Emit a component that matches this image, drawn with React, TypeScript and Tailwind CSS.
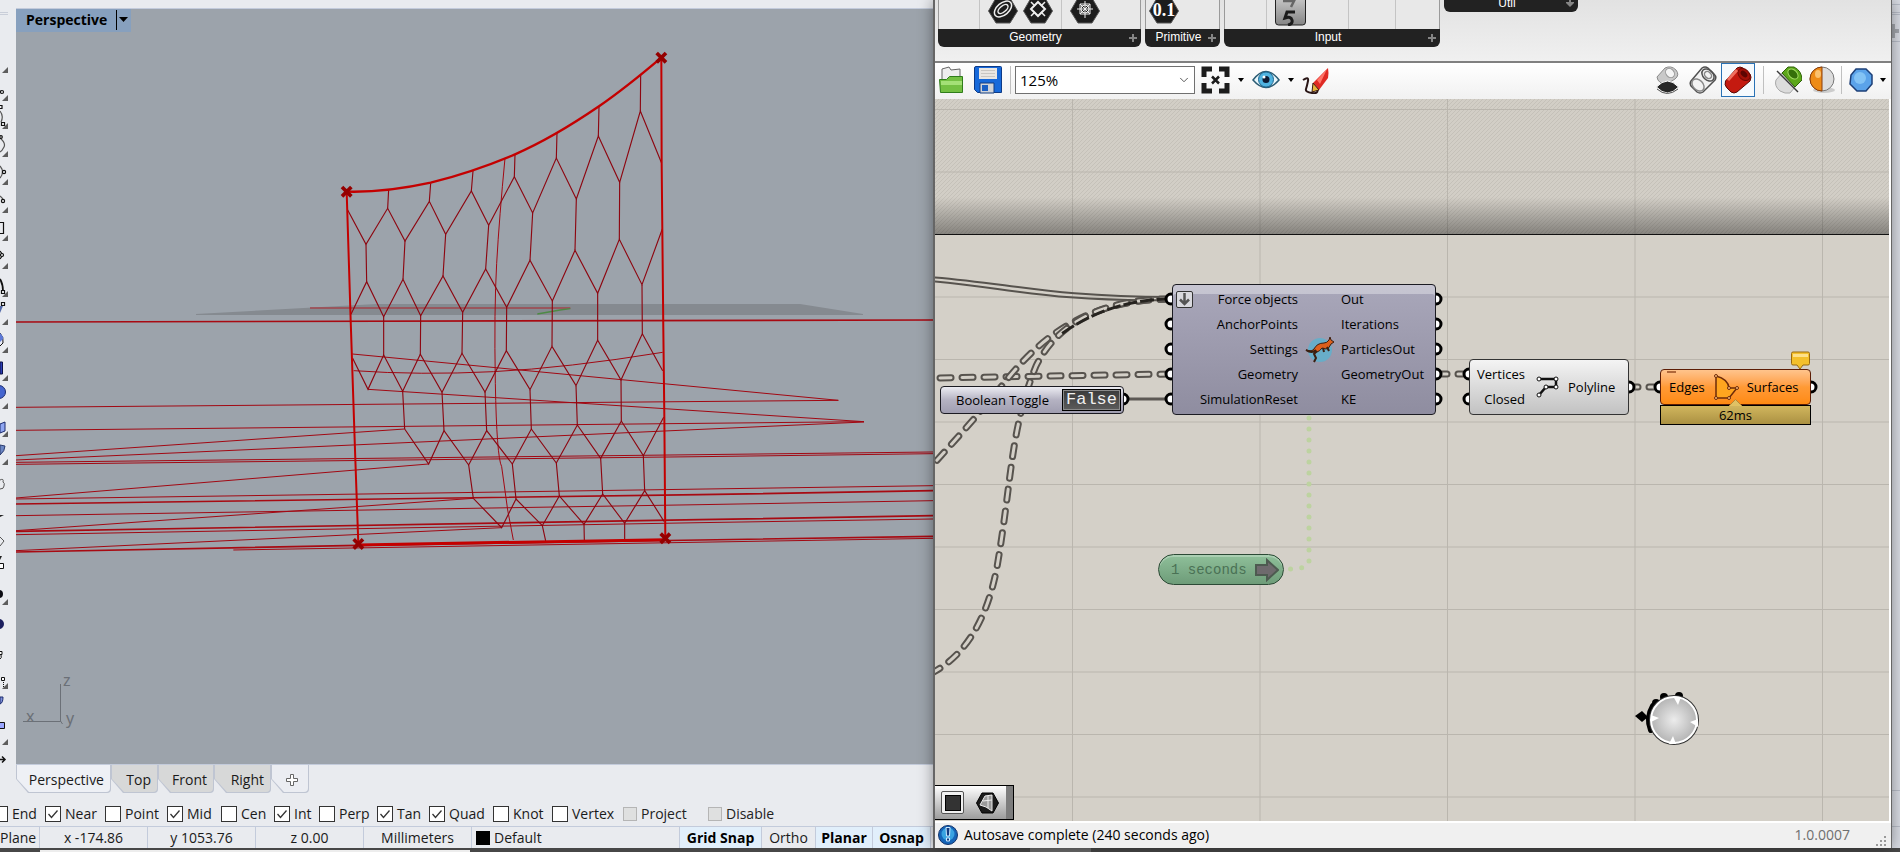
import React from "react";
import { ChevronDown } from "lucide-react";

const snaps = [
  { name: "End", on: false, width: "w-[53px]" },
  { name: "Near", on: true, width: "w-[60px]" },
  { name: "Point", on: false, width: "w-[62px]" },
  { name: "Mid", on: true, width: "w-[54px]" },
  { name: "Cen", on: false, width: "w-[53px]" },
  { name: "Int", on: true, width: "w-[45px]" },
  { name: "Perp", on: false, width: "w-[58px]" },
  { name: "Tan", on: true, width: "w-[52px]" },
  { name: "Quad", on: true, width: "w-[64px]" },
  { name: "Knot", on: false, width: "w-[59px]" },
  { name: "Vertex", on: false, width: "w-[71px]" },
  { name: "Project", on: false, width: "w-[85px]", disabled: true },
  { name: "Disable", on: false, width: "w-[85px]", disabled: true },
];

const modes = [
  { name: "Grid Snap", on: true, width: "w-[82px]" },
  { name: "Ortho", on: false, width: "w-[54px]" },
  { name: "Planar", on: true, width: "w-[57px]" },
  { name: "Osnap", on: true, width: "w-[58px]" },
];

const viewTabs = [
  { name: "Perspective", width: "w-[95px]", active: true },
  { name: "Top", width: "w-[47px]", active: false },
  { name: "Front", width: "w-[56px]", active: false },
  { name: "Right", width: "w-[57px]", active: false },
];

// honeycomb mesh, drawn at 3x and scaled down in the viewport
const meshPaths = [
  "M206 478 203 535M332 460 328 514M459 423 454 483M585 373 583 440M711 308 709 384M837 231 835 318M962 135 961 243",
  "M83 540 138 643 203 535 255 633 328 514 377 613 454 483 506 586 583 440 638 549 709 384 769 507 835 318 899 457 961 243 1025 400",
  "M138 643 140 755M255 633 249 748M377 613 369 738M506 586 497 717M638 549 630 691M769 507 765 661M899 457 898 628",
  "M93 853 140 755 191 860 249 748 302 857 369 738 428 847 497 717 560 832 630 691 697 813 765 661 833 790 898 628 966 764 1027 597",
  "M191 860V978M302 857 301 975M428 847 426 971M560 832 559 962M697 813 696 949M833 790V931M966 764 967 911",
  "M98 985 144 1078 191 975 248 1084 301 973 366 1087 426 970 495 1086 559 962 630 1079 696 949 768 1067 833 931 903 1050 967 911 1028 1022",
  "M248 1084 254 1197M366 1087 372 1202M495 1086 500 1202M630 1079 634 1197M768 1067 772 1185M903 1050 904 1173",
  "M254 1197 326 1302 372 1202 446 1305 500 1202 577 1302 634 1197 709 1299 772 1185 842 1285 904 1173 970 1277 1031 1162",
  "M446 1305 460 1405M577 1302 588 1407M709 1299 718 1398M842 1285 848 1392M970 1277 974 1382",
  "M460 1405 545 1493 588 1407 667 1487 718 1398 792 1483 848 1392 914 1480 974 1382 1032 1474",
  "M667 1487 677 1533M792 1483 793 1530M914 1480V1528",
];

const longLines = [
  "M-912 1132 1555 1111 97 972",
  "M-912 1201 1632 1175 144 1078",
  "M-912 1277 254 1197",
  "M-912 1290 480 1228 1632 1176",
  "M-912 1297 1140 1274 1839 1266",
  "M-912 1303 1140 1280 1839 1271",
  "M-912 1404 326 1302",
  "M-912 1407 480 1387 1839 1367",
  "M-912 1457 1140 1424 1839 1412",
  "M-912 1502 460 1405",
  "M-912 1514 1140 1478 1839 1467",
  "M-912 1562 545 1493",
  "M-260 1560 1839 1525",
  "M101 1022Q300 1036 520 1025T1028 967",
  "M555 385Q538 560 530 700T526 1060 545 1310L563 1440 580 1530",
];

const thickLines = [
  "M-912 876 1839 870",
  "M-912 1422 1140 1394 1839 1382",
  "M-912 1504 1140 1469 1839 1457",
  "M-912 1566 115 1546 1839 1519",
];

const anchors = [[80, 485], [1024, 83], [115, 1542], [1036, 1525]];

const Viewport = () => (
  <section className="relative flex-1 overflow-hidden border-y border-[#c3cbdb] bg-[#9ca3ab]">
    <svg className="absolute inset-0 h-full w-full" aria-hidden="true">
      <g transform="translate(-16 -9)">
        <path d="M196 314 376 304H800L863 314V315H196Z" fill="#858a90" />
        <g transform="translate(320 30) scale(.33333)" fill="none">
          <path d="M-30 834H751" stroke="#a0444d" strokeWidth="5" />
          <path d="M652 852 720 840 751 836" stroke="#4d8a45" strokeWidth="4" />
          <g stroke="#a20812" strokeWidth="3">
            {longLines.map((d) => <path key={d} d={d} />)}
          </g>
          <g stroke="#a80a12" strokeWidth="5">
            {thickLines.map((d) => <path key={d} d={d} />)}
          </g>
          <g stroke="#8d0610" strokeWidth="3.4">
            {meshPaths.map((d) => <path key={d} d={d} />)}
          </g>
          <g stroke="#c40000" strokeWidth="6">
            <path d="M80 485C155 487 245 477 332 458C420 436 505 407 585 373C675 334 755 285 837 229C905 182 965 133 1024 83" strokeWidth="7" />
            <path d="M80 485 92 870 102 1170 105 1260 115 1542" />
            <path d="M1024 83 1025 400 1030 900 1033 1160 1036 1527" />
            <path d="M115 1545 1036 1529" strokeWidth="9" />
          </g>
          <g stroke="#950000" strokeWidth="11">
            {anchors.map(([x, y]) => (
              <path key={x} d={`M${x - 14} ${y - 14}l28 28m0 -28l-28 28`} />
            ))}
          </g>
        </g>
        <path d="M60.500 684V721.500H23M60.500 721l2 3" stroke="#6b7077" fill="none" />
        <g fill="#6b7077" fontFamily="Noto Sans, sans-serif" fontSize="16">
          <text x="63" y="686">z</text>
          <text x="26" y="722">x</text>
          <text x="66" y="724">y</text>
        </g>
      </g>
    </svg>
    <button className="relative flex h-[23px] w-[115px] items-center bg-[#87a0be] pb-[2px] pl-2.5 text-[14px] leading-5 font-bold text-black">
      <span className="w-[90px] text-left">Perspective</span>
      <span className="h-5 w-px bg-black" />
      <svg className="ml-0.5" width="9" height="6" aria-hidden="true"><path d="M0 0h9L4.500 5z" /></svg>
    </button>
  </section>
);

const flyouts = [70, 98, 126, 154, 182, 210, 238, 266, 294, 322, 350, 378, 406, 434, 462, 602, 686, 742];

const SideTools = () => (
  <svg className="w-4 shrink-0" aria-hidden="true">
    <path d="M0 12.500H8M0 14.500H8" stroke="#c9ced9" />
    {flyouts.map((y) => <path key={y} d={`M8 ${y - 3}v6h-6z`} fill="#5d5d5d" />)}
    <g fill="#f4f5f8" stroke="#111" strokeWidth="1.2">
      <path d="M0 91l2 1" />
      <circle cx="2" cy="92" r="1.500" />
      <path d="M-2 105.500h4v3h-4zM1.500 122.500h3v3h-3z" />
      <path d="M0 111q4 5 1 11M0 138q6 5 4 9t-4 5M0 166q5 6 0 12M0 196l3 3" fill="none" stroke="#555" />
      <circle cx="1" cy="137" r="1.300" />
      <circle cx="4" cy="172" r="1.600" />
      <circle cx="3" cy="201" r="1.600" />
      <path d="M-2 222.500H3.500V233.500H-2M0 251l3 4-3 4" fill="none" />
      <circle cx="2" cy="255" r="1.500" />
      <path d="M0 279q3 5 3 12" fill="none" strokeWidth="1.800" />
      <path d="M1.500 290.500h3v3h-3zM1.500 302.500h3v3h-3z" />
    </g>
    <path d="M0 306l3 0-3 7z" fill="#536aa9" />
    <path d="M0 333q4 4 3 10l-3 3" fill="#e9ebf5" stroke="#111" />
    <path d="M0 333q4 4 3 6l-3 3z" fill="#5d79d8" />
    <path d="M0 362h2.500v12H0z" fill="#2c3db6" stroke="#0d1245" />
    <circle cx="-1" cy="392" r="6.500" fill="#4565cf" stroke="#1c2c6e" />
    <path d="M0 424l5-2v9l-5 2z" fill="#8fa6f2" stroke="#1c2c6e" />
    <path d="M0 445l5 1q0 5-5 9z" fill="#6c87c5" stroke="#2b3c6e" />
    <path d="M0 480q4-2 3 2 2 1 1 4 0 3-4 3M0 537l4 4-4 5" fill="none" stroke="#555" />
    <path d="M0 515h4l-4 2M0 556l2 0-2 4z" fill="#222" />
    <path d="M-2 563.500H3.500V568.500H-2" fill="#fff" stroke="#111" />
    <circle cx="-1" cy="594" r="4" fill="#0c0c14" />
    <circle cx="-1" cy="624" r="5" fill="#1b1f5e" />
    <path d="M-1 651.500h3v3h-3zM1.500 677.500h3v3h-3zM0 659q2-1 1-4" fill="#fff" stroke="#111" />
    <path d="M3.500 682v5" stroke="#111" strokeDasharray="1 1" />
    <path d="M0 697h3q0 6-3 7z" fill="#7d8fd9" stroke="#1c2c6e" />
    <path d="M-1 722.500H4.500V728.500H-1" fill="#9aa6ff" stroke="#111" />
    <path d="M0 759.500h4m-2-3l3 3-3 3" fill="none" stroke="#111" strokeWidth="1.500" />
  </svg>
);

const ViewTabs = () => (
  <nav className="flex h-7 pl-4 text-[14px] leading-5">
    {viewTabs.map((tab) => (
      <button
        key={tab.name}
        className={`${tab.width} flex h-7 rounded-br bg-[#bfc5d2] pr-px pb-px pl-px [clip-path:polygon(0_0,100%_0,100%_100%,12px_100%,0_14px)]`}
      >
        <span
          className={`flex h-full w-full items-center justify-end rounded-br pt-0.5 pr-1.5 [clip-path:polygon(0_0,100%_0,100%_100%,12px_100%,0_14px)] ${
            tab.active ? "bg-[#eef0f5]" : "bg-[#d7d8d8]"
          }`}
        >
          {tab.name}
        </span>
      </button>
    ))}
    <button
      aria-label="New viewport"
      className="flex h-7 w-[38px] rounded-br bg-[#bfc5d2] px-px pb-px [clip-path:polygon(0_0,100%_0,100%_100%,12px_100%,0_14px)]"
    >
      <span className="flex h-full w-full items-center justify-center rounded-br bg-[#ebedf2] pt-0.5 pl-1 [clip-path:polygon(0_0,100%_0,100%_100%,12px_100%,0_14px)]">
        <svg width="12" height="12" fill="#fff" stroke="#666"><path d="M4.500.5h3v4h4v3h-4v4h-3v-4h-4v-3h4z" /></svg>
      </span>
    </button>
  </nav>
);

const SnapRow = () => (
  <div className="-ml-2 flex h-[33px] items-center pt-2 text-[14px] leading-5">
    {snaps.map((s) => (
      <label key={s.name} className={`${s.width} flex shrink-0 items-center gap-1 ${s.disabled ? "text-[#222]" : ""}`}>
        <span className="grid shrink-0">
          <input
            type="checkbox"
            defaultChecked={s.on}
            disabled={s.disabled}
            className="col-start-1 row-start-1 h-4 w-4 appearance-none border border-[#333] bg-white disabled:h-3.5 disabled:w-3.5 disabled:border-[#b5b5b5] disabled:bg-[#dfe0e0]"
          />
          {s.on && (
            <svg className="pointer-events-none col-start-1 row-start-1" width="16" height="16" aria-hidden="true">
              <path d="M3.500 8l3 3.500 6-7" fill="none" stroke="#333" strokeWidth="1.300" />
            </svg>
          )}
        </span>
        {s.name}
      </label>
    ))}
  </div>
);

const LeftStatus = () => (
  <footer className="flex h-[22px] border-t border-[#c3cbdb] text-[14px] leading-[22px]">
    <span className="w-10 border-r border-[#c3cbdb] pr-2 text-right">Plane</span>
    <span className="w-[108px] border-r border-[#c3cbdb] text-center">x -174.86</span>
    <span className="w-[108px] border-r border-[#c3cbdb] text-center">y 1053.76</span>
    <span className="w-[108px] border-r border-[#c3cbdb] text-center">z 0.00</span>
    <span className="w-[108px] border-r border-[#c3cbdb] text-center">Millimeters</span>
    <span className="flex flex-1 items-center gap-1 pl-1">
      <i className="h-3.5 w-3.5 bg-black" />
      Default
    </span>
    {modes.map((m) => (
      <button
        key={m.name}
        className={`${m.width} border-l border-[#c3cbdb] ${m.on ? "bg-[#e1effb] font-bold text-black" : ""}`}
      >
        {m.name}
      </button>
    ))}
    <span className="w-[3px] border-l border-[#c3cbdb]" />
  </footer>
);

const Hex = ({ children }: { children?: React.ReactNode }) => (
  <svg width="30" height="24" viewBox="0 3 30 24" className="shrink-0" aria-hidden="true">
    <path d="M8 1h14l7.500 13L22 26H8L.5 14z" fill="#1c1c1c" stroke="#555" />
    <g fill="none" stroke="#eee" strokeWidth="1.500">{children}</g>
  </svg>
);

const RibbonGroup = ({ name, width, children }: { name: string; width: string; children: React.ReactNode }) => (
  <section className={`${width} flex flex-col`}>
    <div className="flex h-[29px] border-x border-[#9a9a9a] bg-[#e8e8e8]">{children}</div>
    <div className="flex h-[18px] items-center rounded-b-md bg-[#222] px-1 font-['Liberation_Sans',sans-serif] text-[12px] leading-4 text-white">
      <span className="flex-1 pb-0.5 text-center">{name}</span>
      <svg width="8" height="8" aria-hidden="true"><path d="M3 0h2v3h3v2H5v3H3V5H0V3h3z" fill="#858585" /></svg>
    </div>
  </section>
);

const Ribbon = () => (
  <header className="flex h-[61px] gap-1 bg-linear-to-b from-[#e2e2e2] to-[#f0f0f0] pl-[3px]">
    <RibbonGroup name="Geometry" width="w-[203px]">
      <span className="w-[41px] border-r border-[#c4c4c4]" />
      <span className="flex w-[82px] gap-[5px] border-r border-[#c4c4c4] pl-2">
        <Hex>
          <ellipse cx="15" cy="12" rx="10" ry="6" transform="rotate(-40 15 12)" />
          <ellipse cx="15" cy="12" rx="6" ry="3" transform="rotate(-40 15 12)" />
        </Hex>
        <Hex>
          <path d="M15 5l7 7-7 7-7-7z" strokeWidth="2" />
          <path d="M8 5l4 4M22 5l-4 4M8 19l4-4M22 19l-4-4" />
        </Hex>
      </span>
      <span className="pl-2">
        <Hex>
          <path d="M10 7h10v10H10zM15 4v17M7 12h16M10 7l10 10M20 7L10 17" strokeWidth="1" />
          <circle cx="15" cy="12" r="4" strokeWidth="1" />
        </Hex>
      </span>
    </RibbonGroup>
    <RibbonGroup name="Primitive" width="w-[75px]">
      <span className="grid pl-[3px]">
        <span className="col-start-1 row-start-1"><Hex /></span>
        <b className="col-start-1 row-start-1 w-[30px] text-center font-['Liberation_Serif',serif] text-[18px] leading-5 text-white">0.1</b>
      </span>
    </RibbonGroup>
    <RibbonGroup name="Input" width="w-[216px]">
      <span className="w-[42px] border-r border-[#c4c4c4]" />
      <span className="w-[82px] border-r border-[#c4c4c4] pl-2">
        <svg width="31" height="26" aria-hidden="true">
          <defs>
            <linearGradient id="digit" x2="0" y2="1"><stop stopColor="#c6c6c6" /><stop offset="1" stopColor="#858585" /></linearGradient>
          </defs>
          <path d="M.5-2v24q0 3 3 3h24q3 0 3-3V-2z" fill="url(#digit)" stroke="#222" />
          <path d="M8 1h11l-3 6" fill="none" stroke="#666" strokeWidth="2.500" />
          <path d="M20 12h-8l-2 6q6-2 7 2t-4 5" fill="none" stroke="#1c1c1c" strokeWidth="3" />
        </svg>
      </span>
      <span className="w-[47px] border-r border-[#c4c4c4]" />
    </RibbonGroup>
    <section className="flex h-3 w-[134px] items-start rounded-b-md bg-[#222] px-1 font-['Liberation_Sans',sans-serif] text-[12px] leading-4 text-white">
      <span className="flex-1 text-center leading-[6px]">Util</span>
      <svg width="8" height="7" aria-hidden="true"><path d="M3 0h2v2h3v1L4 7 0 3V2h3z" fill="#858585" /></svg>
    </section>
  </header>
);

const Caret = () => (
  <svg width="6" height="4" className="shrink-0" aria-hidden="true"><path d="M0 0h6L3 4z" /></svg>
);

const Toolbar = () => (
  <div className="flex h-[38px] items-center border-t-2 border-[#808080] bg-linear-to-b from-white to-[#f1f1f1] pr-[5px] pb-0.5 pl-[3px]">
    <button aria-label="Open" className="mr-2">
      <svg width="28" height="28">
        <path d="M4 16V3l7-2 2 3 9-1v13z" fill="#eee" stroke="#666" />
        <path d="M1.500 13.500h7l3-3h13v16H2.500z" fill="#74c043" stroke="#2f7d1b" />
        <path d="M3 15h21v4H3z" fill="#a4e077" />
      </svg>
    </button>
    <button aria-label="Save" className="mr-2">
      <svg width="28" height="28">
        <path d="M.5 2q0-1.500 1.500-1.500h24.500q1 0 1 1v25h-24l-3-3z" fill="#1769da" stroke="#0d3a86" />
        <path d="M5 2h18v11H5z" fill="#e9e6e2" />
        <path d="M7 4.500h14M7 7.500h14M7 10.500h14" stroke="#c9c6c2" />
        <path d="M6 17h14v10H6z" fill="#d0d3d8" stroke="#123d80" />
        <path d="M8 19h6v6H8z" fill="#1a5fc4" />
      </svg>
    </button>
    <span className="mr-1 h-7 w-px bg-[#c0c0c0]" />
    <div className="grid w-[180px] items-center">
      <select aria-label="Zoom" className="col-start-1 row-start-1 h-7 w-full appearance-none border border-[#707070] bg-white pl-1 text-[15px] leading-5 text-black">
        <option>125%</option>
      </select>
      <ChevronDown className="pointer-events-none col-start-1 row-start-1 mr-1 h-3.5 w-3.5 justify-self-end text-[#444]" strokeWidth={1.5} />
    </div>
    <button aria-label="Zoom extents" className="ml-1.5 flex items-center gap-2">
      <svg width="29" height="28" fill="none" stroke="#1c1c1c" strokeWidth="5">
        <path d="M3 11V3h8M18 3h8v8M26 17v8h-8M11 25H3v-8" />
        <path d="M11 10.500l7 7m0-7l-7 7" strokeWidth="2.500" />
      </svg>
      <Caret />
    </button>
    <button aria-label="Named views" className="ml-2 flex items-center gap-2">
      <svg width="28" height="28">
        <path d="M1 14Q14-3 27 14 14 29 1 14z" fill="#e8f6fb" stroke="#2a5b73" strokeWidth="1.500" />
        <circle cx="14" cy="13.500" r="7.500" fill="#4fb3e0" stroke="#1c6690" />
        <circle cx="14" cy="13.500" r="3.500" fill="#0e1b33" />
        <circle cx="12" cy="11" r="1.500" fill="#fff" />
      </svg>
      <Caret />
    </button>
    <button aria-label="Sketch" className="ml-2">
      <svg width="28" height="28">
        <path d="M1 14q6-4 5 1t-2 8 6 4 5-4" fill="none" stroke="#2a1616" strokeWidth="2" />
        <path d="M11 17L26 2q1 5 0 10L17 24z" fill="#df2a24" />
        <path d="M15 14L25 3l-7 15z" fill="#ff7468" />
        <path d="M11 17l6 7-7 2z" fill="#e7b53c" stroke="#3a1a10" />
      </svg>
    </button>
    <div className="ml-auto flex items-center">
      <button aria-label="No preview" className="mr-[7px]">
        <svg width="28" height="28">
          <path d="M3 11L11 2q6-3 11 2 4 5-1 9l-8 5q-9 0-10-7z" fill="#c9c9c9" stroke="#8a8a8a" />
          <ellipse cx="16" cy="7" rx="4" ry="5" fill="#f4f4f4" stroke="#999" transform="rotate(-40 16 7)" />
          <path d="M2.500 21q11-12 22 0-11 12-22 0z" fill="#262626" stroke="#fff" />
          <path d="M3 23q10 9 21 0" fill="none" stroke="#555" />
        </svg>
      </button>
      <button aria-label="Wireframe preview" className="mr-1">
        <svg width="28" height="28" fill="none" stroke="#505050" strokeWidth="1.500">
          <path d="M2 15L13 2q3-2 6 0l6 6q3 3 1 6L14 26q-3 2-6 0l-5-5q-3-3-1-6z" fill="#f2f2f2" />
          <ellipse cx="19" cy="9" rx="7" ry="5" transform="rotate(45 19 9)" />
          <ellipse cx="19" cy="9" rx="4" ry="3" transform="rotate(45 19 9)" stroke="#888" />
          <ellipse cx="9" cy="19" rx="7" ry="5" transform="rotate(45 9 19)" stroke="#888" />
        </svg>
      </button>
      <button aria-label="Shaded preview" className="mr-2 flex h-[34px] w-[34px] items-center justify-center border border-[#2a72b5] bg-[#f6fafd]">
        <svg width="28" height="28">
          <path d="M1.500 15L13 2q3-2 6 0l7 6q2 3 0 7L13 26q-3 2-6 0l-4-4q-3-3-1.500-7z" fill="#c41a10" stroke="#5c0703" />
          <ellipse cx="20" cy="8.500" rx="7" ry="5" transform="rotate(45 20 8.500)" fill="#a31108" stroke="#740a05" />
          <ellipse cx="20" cy="8" rx="4" ry="2.500" transform="rotate(45 20 8)" fill="#5c0502" />
          <path d="M4 14l9-10" stroke="#f0705f" strokeWidth="3" />
        </svg>
      </button>
      <span className="mr-2.5 h-7 w-px bg-[#c0c0c0]" />
      <button aria-label="Selected only" className="mr-[7px]">
        <svg width="28" height="28">
          <path d="M2 14l6-7 13 14-5 6q-5 1-10-2-6-5-4-11z" fill="#dcdcdc" stroke="#a8a8a8" />
          <path d="M8 7l6-6h6q8 4 8 13l-7 7z" fill="#5ca71a" stroke="#2e6206" />
          <ellipse cx="19" cy="8" rx="6" ry="4" transform="rotate(45 19 8)" fill="#35700a" stroke="#a2dc61" />
          <path d="M3 5l21 21" stroke="#3a3a3a" strokeWidth="1.500" />
        </svg>
      </button>
      <button aria-label="Preview colours" className="mr-1.5">
        <svg width="26" height="28">
          <ellipse cx="15" cy="24" rx="11" ry="3" fill="#ccc" />
          <circle cx="13" cy="13" r="12" fill="#dcdcdc" stroke="#777" />
          <path d="M13 1a12 12 0 0 0 0 24z" fill="#ee8b17" stroke="#8a3c0a" />
          <ellipse cx="9" cy="8" rx="3" ry="4" fill="#fbc16f" />
        </svg>
      </button>
      <span className="mr-1.5 h-7 w-px bg-[#c0c0c0]" />
      <button aria-label="Mesh quality" className="flex items-center gap-1.5">
        <svg width="26" height="28">
          <path d="M8 3l10 0 6 6 0 9-6 7-9 0-7-7 1-9z" fill="#5ba3ea" stroke="#1d3f77" strokeWidth="1.500" />
          <circle cx="12" cy="12" r="6" fill="#8dcaf8" opacity=".8" />
        </svg>
        <Caret />
      </button>
    </div>
  </div>
);

// input and output grips, half hidden under their components
const ports = [
  [1171, 299], [1171, 324], [1171, 349], [1171, 374], [1171, 399],
  [1436, 299], [1436, 324], [1436, 349], [1436, 374], [1436, 399],
  [1123, 399], [1469, 374], [1469, 399], [1629, 387], [1660, 387], [1811, 387],
];

const dashedWires = [
  "M1171 374L935 378",
  "M1171 299C1080 299 1035 345 1005 382S955 440 930 468",
  "M1171 299C1110 299 1060 318 1036 366C1010 430 1012 480 997 567C988 615 968 655 930 674",
  "M1469 374H1437",
  "M1660 387H1629",
];

const CanvasBackdrop = () => (
  <svg className="absolute inset-0 h-full w-full" aria-hidden="true">
    <defs>
      <pattern id="hatch" width="4" height="4" patternUnits="userSpaceOnUse">
        <path d="M-1 5L5-1M-1 1L1-1M3 5L5 3" stroke="#c2beb6" strokeWidth=".8" />
      </pattern>
      <linearGradient id="fade" x2="0" y2="1">
        <stop stopColor="#000" stopOpacity="0" />
        <stop offset="1" stopColor="#000" stopOpacity=".36" />
      </linearGradient>
      <pattern id="grid" x="137" y="10" width="187.500" height="62.500" patternUnits="userSpaceOnUse">
        <path d="M.5 0V63M0 .5H188" stroke="#bab6ae" fill="none" />
      </pattern>
      <radialGradient id="knob">
        <stop stopColor="#ececec" />
        <stop offset="1" stopColor="#b2b2b2" />
      </radialGradient>
    </defs>
    <rect width="100%" height="135" fill="#d2cec6" />
    <rect width="100%" height="135" fill="url(#hatch)" />
    <rect width="100%" height="100%" fill="url(#grid)" />
    <rect y="98" width="100%" height="37" fill="url(#fade)" />
    <path d="M0 135.500H4000" stroke="#111" />
    <g transform="translate(-935 -99)" fill="none">
      <path d="M930 277C1010 283 1050 297 1171 297M930 281C1010 288 1050 302 1171 300" stroke="#57534e" strokeWidth="2" />
      <path d="M1123 399H1171" stroke="#5d5955" strokeWidth="3" />
      {dashedWires.map((d) => (
        <g key={d} strokeLinecap="round" strokeDasharray="11 11">
          <path d={d} stroke="#57534e" strokeWidth="7" />
          <path d={d} stroke="#d4d0c8" strokeWidth="3" />
        </g>
      ))}
      <path d="M1171 299Q1110 299 1060 335" stroke="#26231f" strokeWidth="3" strokeDasharray="14 3" />
      <path d="M1309 418V561Q1309 569 1290 569" stroke="#bdd3a0" strokeWidth="5" strokeLinecap="round" strokeDasharray="0 11" />
      <g fill="#fff" stroke="#000" strokeWidth="3">
        {ports.map(([x, y]) => <circle key={`${x}-${y}`} cx={x} cy={y} r="5" />)}
      </g>
      {/* compass widget */}
      <path d="M1635 716l7-5 6 6-6 5z" fill="#000" />
      <circle cx="1664" cy="697" r="4" fill="#000" />
      <circle cx="1656" cy="703" r="4" fill="#000" />
      <circle cx="1679" cy="696" r="4" fill="#000" />
      <path d="M1653 706Q1646 718 1651 730" stroke="#000" strokeWidth="6" strokeLinecap="round" />
      <circle cx="1674" cy="720" r="24" fill="url(#knob)" stroke="#333" strokeWidth="2" />
      <circle cx="1674" cy="720" r="23" stroke="#fff" strokeWidth="2" />
      <path d="M1673 696l8 1-3 8zM1698 719l-8 3 8 5zM1669 744l4-8 3 8zM1651 715l8 3-8 4z" fill="#fff" />
    </g>
  </svg>
);

const Canvas = () => (
  <main className="relative mr-0.5 flex-1 overflow-hidden bg-[#d4d0c8] text-[13px] leading-4 text-black">
    <CanvasBackdrop />

    <div className="absolute top-[287px] left-[5px] flex h-7 w-[184px] items-center rounded border border-[#1b1b22] bg-linear-to-b from-[#ececf2] via-[#b4b2c2] to-[#a09eb0] p-0.5">
      <span className="flex-1 text-center">Boolean Toggle</span>
      <button className="flex h-full w-[59px] items-center justify-center border border-black bg-linear-to-b from-[#3a3a3a] to-[#5c5c5c] font-['Liberation_Mono',monospace] text-[17px] leading-5 text-[#f0f0f0] ring-1 ring-[#8a8a8a] ring-inset">
        False
      </button>
    </div>

    <div className="absolute top-[185px] left-[237px] flex h-[131px] w-[264px] rounded border border-[#1b1b22] bg-linear-to-b from-[#a9a7ba] to-[#8f8da0] py-0.5 shadow-[inset_0_9px_0_rgba(255,255,255,0.35)]">
      <button aria-label="Collapse inputs" className="mt-1 ml-[3px] flex h-[17px] w-[17px] items-center justify-center rounded-xs border border-[#333] bg-[#d9d9de]">
        <svg width="13" height="13" fill="none" stroke="#555" strokeWidth="2.500"><path d="M6.500 0v11M2 6.500l4.500 4.500L11 6.500" /></svg>
      </button>
      <ul className="w-[105px] text-right leading-[25px]">
        <li>Force objects</li>
        <li>AnchorPoints</li>
        <li>Settings</li>
        <li>Geometry</li>
        <li>SimulationReset</li>
      </ul>
      <div className="flex w-[43px] items-center justify-center">
        <svg width="30" height="28" aria-hidden="true">
          <circle cx="15" cy="14" r="12" fill="#5fb0cc" opacity=".85" />
          <path d="M1 14q4 3 8-1 3-6 10-6 3 0 5-3l1-3 1 3 3 2-3 2q-2 5-5 5l-4-1q-2 3-5 4z" fill="#dd5f1c" stroke="#3b1f10" />
          <path d="M1 14q6 4 10 0M12 15l-3 3 2 4-2 4M22 11l2 4M18 12l1 4" fill="none" stroke="#3b1f10" strokeWidth="2" />
        </svg>
      </div>
      <ul className="leading-[25px]">
        <li>Out</li>
        <li>Iterations</li>
        <li>ParticlesOut</li>
        <li>GeometryOut</li>
        <li>KE</li>
      </ul>
    </div>

    <div className="absolute top-[260px] left-[534px] flex h-14 w-[160px] items-center rounded border border-[#333] bg-linear-to-b from-[#f4f4f4] to-[#c2c2c2]">
      <ul className="w-[55px] text-right leading-[25px]">
        <li>Vertices</li>
        <li>Closed</li>
      </ul>
      <svg className="ml-[11px]" width="24" height="24" aria-hidden="true">
        <path d="M3 4h17v8h-10l-7 8" fill="none" stroke="#111" strokeWidth="2.500" />
        <g fill="#fff" stroke="#111">
          <circle cx="3" cy="4" r="2" /><circle cx="20" cy="4" r="2" /><circle cx="20" cy="12" r="2" />
          <circle cx="10" cy="12" r="2" /><circle cx="3" cy="20" r="2" />
        </g>
      </svg>
      <span className="ml-2">Polyline</span>
    </div>

    <div className="absolute top-[270px] left-[725px] w-[151px]">
      <div className="flex h-9 items-center rounded border border-[#5c1d05] bg-linear-to-b from-[#ffc48c] via-[#ff9a35] to-[#ff8a10] pl-2">
        <span>Edges</span>
        <svg className="ml-2 overflow-visible" width="26" height="28" aria-hidden="true">
          <path d="M3 3v22h13l8-10h-8q-1-9-13-12z" fill="#ffa51f" stroke="#6e2b09" strokeWidth="1.500" />
          <g fill="#ffc180" stroke="#6e2b09">
            <circle cx="3" cy="3" r="1.500" /><circle cx="3" cy="25" r="1.500" /><circle cx="16" cy="25" r="1.500" />
            <circle cx="24" cy="15" r="1.500" /><circle cx="16" cy="15" r="1.500" />
          </g>
        </svg>
        <span className="ml-2">Surfaces</span>
      </div>
      <div className="h-5 border border-black bg-linear-to-b from-[#d1b65e] to-[#ab9142] text-center leading-[18px]">62ms</div>
      <svg className="absolute top-[30px] left-[69px]" width="13" height="7" aria-hidden="true"><path d="M0 7l6.500-6.500L13 7" fill="#e0c264" stroke="#b0893a" /></svg>
      <svg className="absolute -top-[18px] left-[131px]" width="19" height="20" aria-hidden="true">
        <path d="M2 1h15q1.500 0 1.500 1.500v10q0 1.500-1.500 1.500h-5l-3 4-3-4H2Q.5 14 .5 12.500v-10Q.5 1 2 1z" fill="#f4c02c" stroke="#9a6a10" />
        <path d="M2 3h15v3H2z" fill="#fde08b" />
      </svg>
      <i className="absolute top-0.5 left-[7px] h-0.5 w-[9px] bg-[#b0683a]" />
    </div>

    <div className="absolute top-[455px] left-[223px] flex h-[31px] w-[126px] items-center justify-between rounded-full border border-[#2c4a36] bg-linear-to-b from-[#8fc09a] to-[#6e9c79] pr-1 pl-3 font-['Liberation_Mono',monospace] text-[14px] text-[#4a7155] shadow-[inset_0_2px_0_rgba(255,255,255,0.25)]">
      1 seconds
      <svg width="24" height="24" aria-hidden="true"><path d="M1 7h11V2l11 10-11 10v-5H1z" fill="#6e6a6d" stroke="#4d5a50" strokeWidth="2" /></svg>
    </div>

    <div className="absolute bottom-px left-0 flex h-[35px] w-[79px] items-center border border-l-0 border-black bg-linear-to-b from-white to-[#9d9d9d] pl-1.5">
      <button aria-label="Markov widget" className="mr-3 flex h-[23px] w-[23px] items-center justify-center rounded-xs border border-[#555] bg-[#f0f0f0]">
        <i className="h-4 w-4 border border-black bg-[#333]" />
      </button>
      <button aria-label="Mesh widget">
        <svg width="23" height="22">
          <path d="M6 1h11l5.500 10L17 21H6L.5 11z" fill="#1b1b1b" stroke="#000" />
          <path d="M9 4l7-1v16l-6-4-6-2z" fill="#9a9a9a" stroke="#eee" />
          <path d="M7 9l9-1M12 4v12" stroke="#eee" />
        </svg>
      </button>
      <i className="ml-auto h-full w-[7px] bg-[#7d7d7d]" />
    </div>
  </main>
);

const RightStatus = () => (
  <footer className="flex h-[27px] items-center border-t-2 border-white bg-[#f0f0f0] pb-px pl-[3px] text-[14px] leading-5">
    <svg width="20" height="20" className="mr-1.5" aria-hidden="true">
      <circle cx="10" cy="10" r="9.500" fill="#1565b8" stroke="#12336b" />
      <circle cx="10" cy="9" r="6.500" fill="#38a3e2" />
      <path d="M8 2.500h4L11.500 11h-3zM8.500 13h3v3h-3z" fill="#123a80" stroke="#cdeaff" />
    </svg>
    <span className="text-black">Autosave complete (240 seconds ago)</span>
    <span className="mr-[26px] ml-auto text-[#6f6f6f]">1.0.0007</span>
    <svg width="11" height="11" className="mr-1 self-end" fill="#999" aria-hidden="true">
      <path d="M8 0h2v2H8zM4 4h2v2H4zM8 4h2v2H8zM0 8h2v2H0zM4 8h2v2H4zM8 8h2v2H8z" />
    </svg>
  </footer>
);

const App = () => {
  return (
    <div className="flex h-screen flex-col overflow-hidden bg-[#e9ebef] font-['Open_Sans','Noto_Sans',sans-serif] text-[#1a1a1a]">
      <div className="flex min-h-0 flex-1">
        <div className="flex min-w-0 grow-[933] basis-0 flex-col overflow-hidden">
          <div className="flex flex-1 pt-2">
            <div className="-mt-2 flex"><SideTools /></div>
            <Viewport />
          </div>
          <ViewTabs />
          <SnapRow />
          <LeftStatus />
        </div>
        <div className="relative flex min-w-0 grow-[956] basis-0 flex-col border-r border-l-2 border-[#666] bg-white shadow-[0_0_14px_rgba(0,0,0,0.4)]">
          <Ribbon />
          <Toolbar />
          <Canvas />
          <RightStatus />
        </div>
        <svg className="w-2 shrink-0 bg-[#d9dce4]" aria-hidden="true">
          <path d="M0 4.500H8M0 12.500H8M0 14.500H8M0 41.500H8M0 790.500H8M0 826.500H8" stroke="#b9bec9" />
          <path d="M0 24h3v5h4v4H3v5H0z" fill="#a3a6ad" />
        </svg>
      </div>
      <div className="flex h-1 bg-[#474747]">
        <i className="mt-0.5 ml-10 h-0.5 w-[430px] bg-[#ededed]" />
        <i className="ml-[560px] w-[61px] bg-[#6b6b6b]" />
      </div>
    </div>
  );
};

export default App;
